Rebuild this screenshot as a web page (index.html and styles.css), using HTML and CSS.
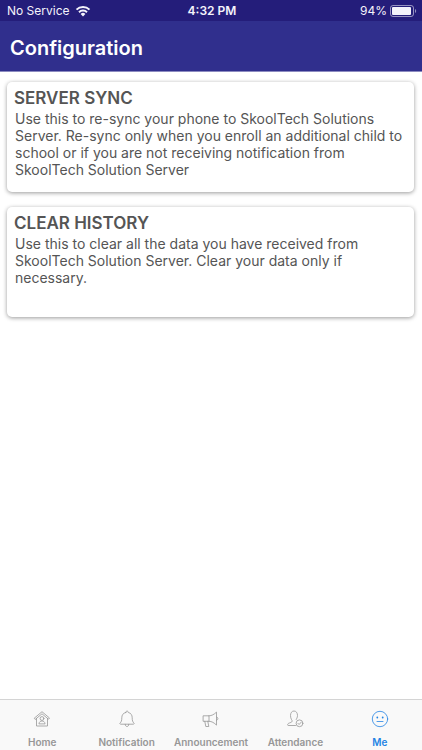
FILE: index.html
```html
<!DOCTYPE html>
<html lang="en">
<head>
    <meta charset="UTF-8">
    <meta name="viewport" content="width=device-width, initial-scale=1.0">
    <title>Configuration</title>
    <link rel="stylesheet" href="styles.css">
</head>
<body>
    <!-- Status bar -->
    <div class="status-bar">
        <div class="status-left">
            <span>No Service</span>
            <svg class="wifi" viewBox="0 0 16 12" aria-hidden="true">
                <path d="M1.5 4.6a9.2 9.2 0 0 1 13 0M4 7.2a5.7 5.7 0 0 1 8 0" fill="none" stroke="currentColor" stroke-width="2"/>
                <path d="M5.6 9a3.4 3.4 0 0 1 4.8 0L8 11.5z" fill="currentColor"/>
            </svg>
        </div>
        <div class="status-time">4:32 PM</div>
        <div class="status-right">
            <span>94%</span>
            <svg class="battery" viewBox="0 0 27 12" aria-hidden="true">
                <rect x=".5" y=".5" width="23" height="11" rx="2.5" fill="none" stroke="currentColor" opacity=".55"/>
                <rect x="2" y="2" width="19" height="8" rx="1" fill="currentColor"/>
                <path d="M25 4v4c1.6-.6 1.6-3.4 0-4z" fill="currentColor" opacity=".55"/>
            </svg>
        </div>
    </div>

    <header class="header">
        <h1>Configuration</h1>
    </header>

    <main class="content">
        <a class="card" href="#sync">
            <h2>SERVER SYNC</h2>
            <p>Use this to re-sync your phone to SkoolTech Solutions Server. Re-sync only when you enroll an additional child to school or if you are not receiving notification from SkoolTech Solution Server</p>
        </a>
        <a class="card" href="#clear">
            <h2>CLEAR HISTORY</h2>
            <p>Use this to clear all the data you have received from SkoolTech Solution Server. Clear your data only if necessary.</p>
        </a>
    </main>

    <!-- Bottom tabs -->
    <nav class="tabs">
        <a class="tab" href="#home">
            <svg viewBox="0 0 18 18" aria-hidden="true">
                <path d="M1.500 8 9 1.700 16.500 8l-1 1.200L9 3.800 2.500 9.200z"/>
                <path d="M3.500 8.500V16h11V8.500"/>
                <circle cx="9" cy="8.500" r="1.900"/>
                <path d="M6 13.500c.3-1.800 1.400-2.500 3-2.500s2.700.7 3 2.500z"/>
            </svg>
            <span>Home</span>
        </a>
        <a class="tab" href="#notification">
            <svg viewBox="0 0 18 18" aria-hidden="true">
                <path d="M7.700 2.500c0-2 2.600-2 2.600 0 2.700.6 3.900 2.600 3.900 5.300 0 3 .6 4.200 1.700 5.200.5.600.2 1.200-.6 1.200H2.700c-.8 0-1.100-.6-.6-1.200 1.100-1 1.700-2.200 1.700-5.200 0-2.700 1.200-4.700 3.900-5.300z"/>
                <path d="M7.200 14.300c0 3.100 3.600 3.100 3.600 0"/>
            </svg>
            <span>Notification</span>
        </a>
        <a class="tab" href="#announcement">
            <svg viewBox="0 0 18 18" aria-hidden="true">
                <path d="M1.500 5.800H7v5.500H1.500z"/>
                <path d="M7 5.800c3 0 5-1.400 7.500-3.700v13c-2.500-2.300-4.500-3.800-7.500-3.800"/>
                <path d="M14.500 7c2 0 2 3.200 0 3.200"/>
                <path d="m2.800 11.300 1 5.200h3l-1-5.200"/>
            </svg>
            <span>Announcement</span>
        </a>
        <a class="tab" href="#attendance">
            <svg viewBox="0 0 18 18" aria-hidden="true">
                <path d="M9.500 15.500H2.200c-.8 0-.8-1.600.3-2.100 1.600-.8 3.500-1.100 3.700-2.200.2-1-1.700-2-1.700-5.700C4.500 2.800 5.900 1 8 1s3.500 1.800 3.500 4.500c0 2-.8 3-1.300 4"/>
                <circle cx="13.500" cy="13.300" r="3.400"/>
                <path d="m11.900 13.300 1.200 1.200 2.100-2.300"/>
            </svg>
            <span>Attendance</span>
        </a>
        <a class="tab active" href="#me">
            <svg viewBox="0 0 18 18" aria-hidden="true">
                <circle cx="9" cy="9" r="7.700"/>
                <path d="M6 11.500h6"/>
                <circle class="eye" cx="6.300" cy="7.500" r=".9"/>
                <circle class="eye" cx="11.700" cy="7.500" r=".9"/>
            </svg>
            <span>Me</span>
        </a>
    </nav>
</body>
</html>
```

FILE: styles.css
```css
* {
    box-sizing: border-box;
}
body {
    margin: 0;
    min-height: 100vh;
    display: flex;
    flex-direction: column;
    background-color: #fff;
    font-family: Inter, "Liberation Sans", sans-serif;
}

/* Status bar */
.status-bar {
    display: grid;
    grid-template-columns: 1fr auto 1fr;
    align-items: center;
    height: 21px;
    padding: 0 5px 0 7px;
    background-color: #241d7a;
    color: #f4f3fb;
    font-size: 12px;
}
.status-left,
.status-right {
    display: flex;
    align-items: center;
    gap: 5px;
}
.status-right {
    justify-content: flex-end;
    gap: 3px;
}
.status-time {
    font-weight: 600;
}
.wifi {
    width: 16px;
    height: 12px;
}
.battery {
    width: 27px;
    height: 12px;
}

/* Title bar */
.header {
    display: flex;
    align-items: center;
    height: 51px;
    padding: 4px 10px 0;
    background-color: #302f8d;
    border-bottom: 1px solid #8c8bc0;
    color: #fff;
}
.header h1 {
    margin: 0;
    font-size: 20px;
    font-weight: 600;
}

/* Cards */
.content {
    flex: 1;
    display: flex;
    flex-direction: column;
    gap: 15px;
    padding: 10px 8px 10px 7px;
}
.card {
    min-height: 110px;
    padding: 6px 7px;
    border-radius: 5px;
    background-color: #fff;
    box-shadow: 0 1px 4px rgba(0, 0, 0, 0.4);
    color: #555;
    text-decoration: none;
}
.card h2 {
    margin: 0;
    font-size: 17px;
    line-height: 21px;
    font-weight: 600;
}
.card p {
    margin: 0;
    padding: 1px;
    font-size: 14px;
    line-height: 17px;
}

/* Bottom tabs */
.tabs {
    display: flex;
    height: 51px;
    border-top: 1px solid #d4d4d4;
    background-color: #f9f9f9;
}
.tab {
    flex: 1 1 0;
    min-width: 0;
    display: flex;
    flex-direction: column;
    align-items: center;
    justify-content: space-between;
    padding: 10px 0 2px;
    color: #979797;
    font-size: 10px;
    line-height: 12px;
    font-weight: 600;
    text-decoration: none;
}
.tab svg {
    width: 18px;
    height: 18px;
    fill: none;
    stroke: currentColor;
    stroke-width: 0.8;
    stroke-linejoin: round;
    stroke-linecap: round;
}
.tab .eye {
    fill: currentColor;
    stroke: none;
}
.tab.active {
    color: #2484e4;
}
```
